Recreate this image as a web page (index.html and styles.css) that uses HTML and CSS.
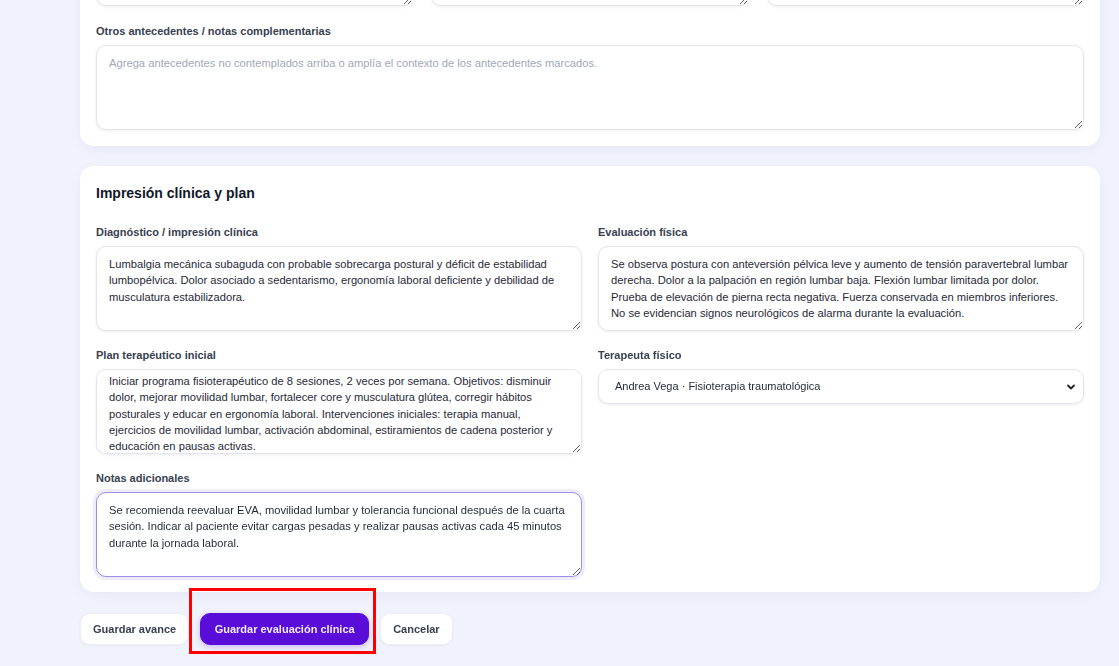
FILE: index.html
```html
<!DOCTYPE html>
<html lang="es">
<head>
    <meta charset="UTF-8">
    <meta name="viewport" content="width=device-width, initial-scale=1.0">
    <title>Evaluación clínica</title>
    <link rel="stylesheet" href="styles.css">
</head>
<body>
    <main class="page">

        <!-- Antecedentes -->
        <section class="card">
            <div class="grid-3">
                <textarea class="input" aria-label="Antecedentes médicos"></textarea>
                <textarea class="input" aria-label="Antecedentes quirúrgicos"></textarea>
                <textarea class="input" aria-label="Medicación actual"></textarea>
            </div>

            <div class="field field-spaced">
                <label class="field-label">Otros antecedentes / notas complementarias</label>
                <textarea class="input" placeholder="Agrega antecedentes no contemplados arriba o amplía el contexto de los antecedentes marcados."></textarea>
            </div>
        </section>

        <!-- Impresión clínica y plan -->
        <section class="card card-plan">
            <h2 class="card-title">Impresión clínica y plan</h2>

            <div class="grid-2">
                <div class="field">
                    <label class="field-label">Diagnóstico / impresión clínica</label>
                    <textarea class="input">Lumbalgia mecánica subaguda con probable sobrecarga postural y déficit de estabilidad lumbopélvica. Dolor asociado a sedentarismo, ergonomía laboral deficiente y debilidad de musculatura estabilizadora.</textarea>
                </div>
                <div class="field">
                    <label class="field-label">Evaluación física</label>
                    <textarea class="input">Se observa postura con anteversión pélvica leve y aumento de tensión paravertebral lumbar derecha. Dolor a la palpación en región lumbar baja. Flexión lumbar limitada por dolor. Prueba de elevación de pierna recta negativa. Fuerza conservada en miembros inferiores. No se evidencian signos neurológicos de alarma durante la evaluación.</textarea>
                </div>
                <div class="field">
                    <label class="field-label">Plan terapéutico inicial</label>
                    <textarea class="input" id="plan">Iniciar programa fisioterapéutico de 8 sesiones, 2 veces por semana. Objetivos: disminuir dolor, mejorar movilidad lumbar, fortalecer core y musculatura glútea, corregir hábitos posturales y educar en ergonomía laboral. Intervenciones iniciales: terapia manual, ejercicios de movilidad lumbar, activación abdominal, estiramientos de cadena posterior y educación en pausas activas.</textarea>
                </div>
                <div class="field">
                    <label class="field-label">Terapeuta físico</label>
                    <select class="input select">
                        <option>Andrea Vega · Fisioterapia traumatológica</option>
                    </select>
                </div>
                <div class="field">
                    <label class="field-label">Notas adicionales</label>
                    <textarea class="input input-focus">Se recomienda reevaluar EVA, movilidad lumbar y tolerancia funcional después de la cuarta sesión. Indicar al paciente evitar cargas pesadas y realizar pausas activas cada 45 minutos durante la jornada laboral.</textarea>
                </div>
            </div>
        </section>

        <!-- Acciones -->
        <div class="actions">
            <button class="btn">Guardar avance</button>
            <span class="highlight">
                <button class="btn btn-primary">Guardar evaluación clínica</button>
            </span>
            <button class="btn">Cancelar</button>
        </div>
    </main>

    <script>
        // El plan es más largo que su caja: queda un poco desplazado
        document.getElementById('plan').scrollTop = 6;
    </script>
</body>
</html>
```

FILE: styles.css
```css
* {
    margin: 0;
    padding: 0;
    box-sizing: border-box;
}

body {
    font-family: "Liberation Sans", Arial, sans-serif;
    background: #f1f3fc;
    color: #1f2937;
    overflow: hidden;
}

.page {
    margin-top: -95px;
    padding: 0 19px 21px 80px;
}

/* Tarjetas */
.card {
    background: #fff;
    border-radius: 14px;
    padding: 16px;
    margin-bottom: 20px;
    box-shadow: 0 4px 14px rgba(40, 50, 110, 0.05);
}

.card-plan {
    padding-bottom: 15px;
}

.card-title {
    font-size: 14px;
    line-height: 20px;
    font-weight: bold;
    color: #111827;
    margin: 1px 0 21px;
}

.grid-3 {
    display: grid;
    grid-template-columns: repeat(3, 1fr);
    gap: 18px;
}

.grid-2 {
    display: grid;
    grid-template-columns: 1fr 1fr;
    column-gap: 16px;
    row-gap: 16px;
}

.field {
    display: flex;
    flex-direction: column;
}

.field-spaced {
    margin-top: 17px;
}

.field-label {
    font-size: 11px;
    line-height: 16px;
    font-weight: bold;
    color: #374151;
    margin-bottom: 6px;
}

/* Campos */
.input {
    font-family: "Liberation Sans", Arial, sans-serif;
    font-size: 11.2px;
    line-height: 16.3px;
    color: #1f2937;
    background: #fff;
    border: 1px solid #e3e6ee;
    border-radius: 10px;
    padding: 9px 12px;
    height: 85px;
    width: 100%;
    resize: vertical;
    box-shadow: 0 1px 3px rgba(20, 30, 60, 0.08);
    outline: none;
}

.input::placeholder {
    color: #a0a8b8;
}

.input-focus {
    border-color: #9d8fe6;
    box-shadow: 0 0 0 3px rgba(120, 90, 230, 0.12);
}

.select {
    font-size: 11px;
    height: 35px;
    padding: 0 30px 0 16px;
    appearance: none;
    -webkit-appearance: none;
    background-image: url("data:image/svg+xml,%3Csvg xmlns='http://www.w3.org/2000/svg' width='10' height='10' viewBox='0 0 10 10'%3E%3Cpath d='M2 3.5l3 3 3-3' fill='none' stroke='%23222' stroke-width='1.8' stroke-linecap='round' stroke-linejoin='round'/%3E%3C/svg%3E");
    background-repeat: no-repeat;
    background-position: right 7px center;
}

/* Botones */
.actions {
    display: flex;
    align-items: center;
    gap: 11px;
    padding-top: 1px;
}

.btn {
    font-family: "Liberation Sans", Arial, sans-serif;
    font-size: 11px;
    font-weight: bold;
    height: 32px;
    padding: 0 12px;
    border-radius: 10px;
    border: 1px solid #eceef5;
    background: #fff;
    color: #374151;
    cursor: pointer;
    box-shadow: 0 1px 3px rgba(20, 30, 60, 0.05);
}

.btn-primary {
    background: #5a0cd8;
    border-color: #5a0cd8;
    color: #efeaff;
    padding: 0 13.5px;
    box-shadow: 0 2px 6px rgba(90, 12, 216, 0.25);
}

/* Recuadro rojo de señalamiento */
.highlight {
    position: relative;
    display: inline-flex;
}

.highlight::after {
    content: "";
    position: absolute;
    top: -25px;
    right: -7px;
    bottom: -9px;
    left: -11px;
    border: 3px solid #ff0000;
    pointer-events: none;
}
```
